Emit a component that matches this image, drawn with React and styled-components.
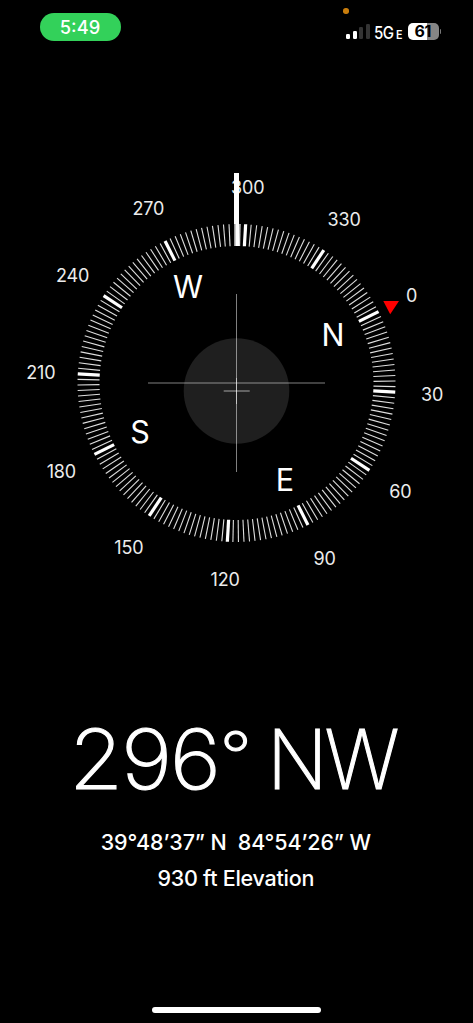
import React from "react";
import styled, { createGlobalStyle } from "styled-components";

const HEADING = 296.7;
const CENTER = { x: 236.5, y: 233 };

const ticks = Array.from({ length: 180 }, (_, i) => i * 2);
const degrees = Array.from({ length: 12 }, (_, i) => i * 30);
const cardinals = [
	{ name: "N", deg: 0 },
	{ name: "E", deg: 90 },
	{ name: "S", deg: 180 },
	{ name: "W", deg: 270 }
];

const polar = (deg, radius) => {
	const a = ((deg - HEADING) * Math.PI) / 180;
	return {
		x: CENTER.x + radius * Math.sin(a),
		y: CENTER.y - radius * Math.cos(a)
	};
};

const Tick = ({ deg }) => {
	const from = polar(deg, 137);
	const to = polar(deg, 159);
	return (
		<TickLine
			$major={deg % 30 === 0}
			x1={from.x}
			y1={from.y}
			x2={to.x}
			y2={to.y}
		/>
	);
};

const StatusBar = () => (
	<Status>
		<TimePill>5:49</TimePill>
		<MicDot />
		<Signal>
			<Bar $height={5.5} $on />
			<Bar $height={8.5} $on />
			<Bar $height={12} />
			<Bar $height={15} />
		</Signal>
		<Network>
			5G<small>E</small>
		</Network>
		<Battery>61</Battery>
		<BatteryTip />
	</Status>
);

const Compass = () => (
	<Dial viewBox="0 0 473 460">
		<circle cx="236.5" cy="241" r="52.8" fill="#1f1f1f" />
		<rect x="148" y="232" width="177" height="2" fill="#fff" opacity="0.25" />
		<rect x="236" y="144" width="1" height="178" fill="#fff" opacity="0.5" />
		<rect x="223.7" y="240" width="26" height="2" fill="#fff" opacity="0.3" />
		<rect x="236" y="228" width="1" height="26" fill="#fff" opacity="0.5" />
		{ticks.map(deg => (
			<Tick key={deg} deg={deg} />
		))}
		{degrees.map(deg => {
			const { x, y } = polar(deg, 196);
			return (
				<DegreeLabel key={deg} x={x} y={y + 6.9}>
					{deg}
				</DegreeLabel>
			);
		})}
		{cardinals.map(({ name, deg }) => {
			const { x, y } = polar(deg, 108);
			return (
				<CardinalLabel key={name} x={x} y={y + 11.1}>
					{name}
				</CardinalLabel>
			);
		})}
		<path d="M383.3 151H399L390.2 164.2Z" fill="#f00" />
		<rect x="234" y="23" width="5" height="51" fill="#fff" />
		<rect x="234" y="74" width="5" height="22" fill="#999" />
		<rect x="235.5" y="74" width="4" height="22" fill="#fff" />
	</Dial>
);

const App = () => (
	<Screen>
		<GlobalStyle />
		<StatusBar />
		<Compass />
		<Heading>
			<Bearing>
				296<DegreeSign>°</DegreeSign>
			</Bearing>{" "}
			<Direction>NW</Direction>
		</Heading>
		<Coordinates>39°48’37” N&nbsp; 84°54’26” W</Coordinates>
		<Elevation>930 ft Elevation</Elevation>
		<HomeIndicator />
	</Screen>
);

const GlobalStyle = createGlobalStyle`
	body {
		margin: 0;
		background: #000;
	}
`;

const Screen = styled.main`
	display: flex;
	flex-direction: column;
	box-sizing: border-box;
	width: 473px;
	height: 1023px;
	overflow: hidden;
	padding-bottom: 10px;
	background: #000;
	color: #fff;
	font-family: Inter, "Liberation Sans", sans-serif;
`;

const Status = styled.header`
	position: relative;
	display: flex;
	align-items: flex-start;
	flex: none;
	box-sizing: border-box;
	height: 150px;
	padding: 13px 32px 0 39.5px;
`;

const TimePill = styled.div`
	width: 81px;
	height: 28px;
	margin-right: auto;
	border-radius: 14px;
	background: #33d15a;
	font-size: 18.3px;
	font-weight: 500;
	line-height: 29px;
	text-align: center;
`;

const MicDot = styled.span`
	position: absolute;
	top: 8px;
	left: 343px;
	width: 5.5px;
	height: 5.5px;
	border-radius: 50%;
	background: #c97d0c;
`;

const Signal = styled.div`
	display: flex;
	align-items: flex-end;
	gap: 2.4px;
	height: 26px;
	margin-right: 4px;
`;

const Bar = styled.span`
	width: 4px;
	height: ${p => p.$height}px;
	border-radius: 1.2px;
	background: ${p => (p.$on ? "#fff" : "#343434")};
`;

const Network = styled.span`
	width: 29px;
	margin-right: 5.5px;
	font-size: 17.3px;
	font-weight: 500;
	line-height: 39px;
	letter-spacing: -0.6px;
	white-space: nowrap;
	transform: scaleX(0.87);
	transform-origin: left;

	small {
		margin-left: 3px;
		font-size: 12.3px;
		font-weight: 600;
	}
`;

const Battery = styled.span`
	width: 30.5px;
	height: 17px;
	margin-top: 10px;
	border-radius: 5px;
	background: linear-gradient(to right, #fff 62%, #858585 62%);
	color: #000;
	font-size: 16px;
	font-weight: 700;
	line-height: 17px;
	letter-spacing: -0.5px;
	text-align: center;
	text-indent: -1px;
`;

const BatteryTip = styled.span`
	width: 1.5px;
	height: 5px;
	margin: 16px 0 0 1px;
	border-radius: 0 2px 2px 0;
	background: #777;
`;

const Dial = styled.svg`
	display: block;
	flex: none;
	width: 473px;
	height: 460px;
`;

const TickLine = styled.line`
	stroke: ${p => (p.$major ? "#fff" : "#dedede")};
	stroke-width: ${p => (p.$major ? 3.2 : 1.1)};
`;

const DegreeLabel = styled.text`
	fill: #ececec;
	font-size: 18px;
	letter-spacing: -0.15px;
	text-anchor: middle;
`;

const CardinalLabel = styled.text`
	fill: #fff;
	font-size: 30.5px;
	text-anchor: middle;
`;

const Heading = styled.h1`
	display: flex;
	height: 100px;
	margin: 99px 0 0 69px;
	font-size: 82.5px;
	font-weight: 200;
	line-height: 100px;
	white-space: nowrap;
	-webkit-text-stroke: 1.1px #fff;
`;

const Bearing = styled.span`
	width: 198px;
	letter-spacing: -2.2px;
	transform: scaleX(1.065);
	transform-origin: left;
`;

const DegreeSign = styled.span`
	margin-left: 1px;
	font-size: 66px;
	line-height: 0;
	vertical-align: 10px;
`;

const Direction = styled.span`
	letter-spacing: -3.2px;
	transform: scaleX(0.96);
	transform-origin: left;
`;

const Coordinates = styled.p`
	margin: 15px 1.5px 0 0;
	font-size: 21.5px;
	font-weight: 500;
	line-height: 36px;
	letter-spacing: -0.13px;
	text-align: center;
	white-space: nowrap;
`;

const Elevation = styled(Coordinates)`
	margin-top: 0;
	letter-spacing: -0.25px;
`;

const HomeIndicator = styled.div`
	flex: none;
	width: 169px;
	height: 6px;
	margin: auto auto 0;
	border-radius: 3px;
	background: #fff;
`;

export default App;
